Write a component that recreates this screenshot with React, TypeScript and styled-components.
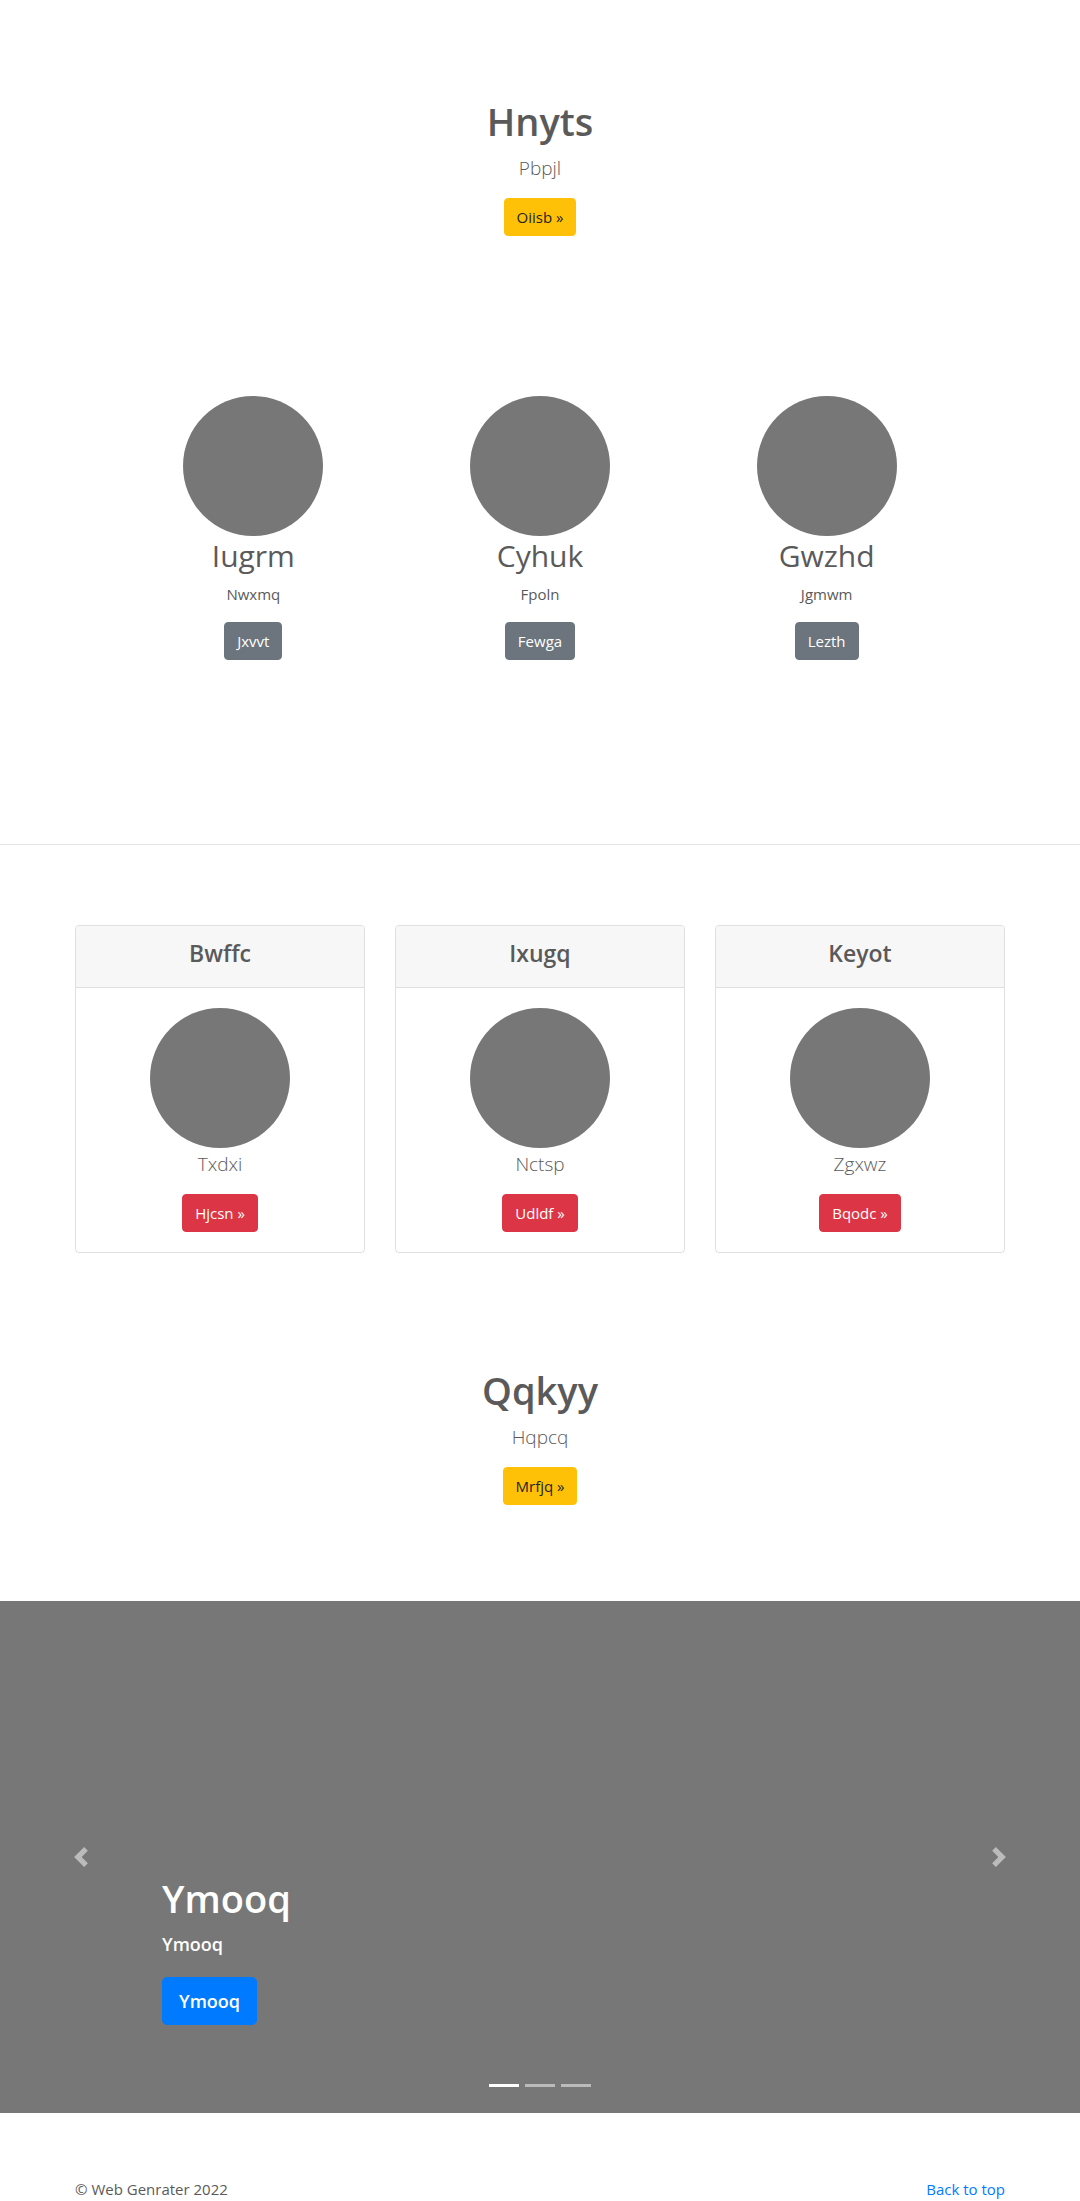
import React from "react";
import styled, { createGlobalStyle, css } from "styled-components";

const GlobalStyle = createGlobalStyle`
  *, *::before, *::after { box-sizing: border-box; }
  body {
    margin: 0;
    background: #fff;
    color: #5a5a5a;
    font-family: "Segoe UI", "Open Sans", "Noto Sans", sans-serif;
    font-size: 15px;
    line-height: 24px;
  }
  h1, h2, h3, p { margin: 0; }
`;

type Tone = "warning" | "secondary" | "danger" | "primary";

const tones: Record<Tone, { background: string; color: string }> = {
  warning: { background: "#ffc107", color: "#212529" },
  secondary: { background: "#6c757d", color: "#fff" },
  danger: { background: "#dc3545", color: "#fff" },
  primary: { background: "#007bff", color: "#fff" },
};

const Button = styled.button<{ $tone: Tone; $large?: boolean }>`
  border: 1px solid ${(p) => tones[p.$tone].background};
  border-radius: 4px;
  background: ${(p) => tones[p.$tone].background};
  color: ${(p) => tones[p.$tone].color};
  padding: 6px 12px;
  font-family: inherit;
  font-size: 15px;
  line-height: 24px;
  cursor: pointer;
  ${(p) =>
    p.$large &&
    css`
      border-radius: 5px;
      padding: 8px 16px;
      font-size: 18px;
      font-weight: 600;
      line-height: 30px;
    `}
`;

const Title = styled.h1`
  margin-bottom: 6px;
  font-size: 38px;
  font-weight: 600;
  line-height: 50px;
`;

const Lead = styled.p`
  margin-bottom: 14px;
  font-size: 19px;
  font-weight: 300;
  line-height: 32px;
`;

const Stack = styled.div`
  display: flex;
  flex-direction: column;
  align-items: center;
  text-align: center;
`;

const Hero = styled(Stack).attrs({ as: "section" })`
  padding: 96px 16px;
`;

const Circle = styled.div`
  width: 140px;
  height: 140px;
  border-radius: 50%;
  background: #777;
`;

const Services = styled.section`
  display: grid;
  grid-template-columns: repeat(3, 1fr);
  max-width: 860px;
  margin: 0 auto;
  padding: 64px 0 184px;
`;

const ServiceName = styled.h2`
  margin-bottom: 6px;
  font-size: 30px;
  font-weight: 400;
  line-height: 40px;
`;

const ServiceText = styled.p`
  margin-bottom: 16px;
`;

const Divider = styled.hr`
  margin: 0;
  border: 0;
  border-top: 1px solid #e5e5e5;
`;

const Cards = styled.section`
  display: grid;
  grid-template-columns: repeat(3, 1fr);
  gap: 30px;
  max-width: 960px;
  margin: 0 auto;
  padding: 80px 15px 16px;
`;

const Card = styled.article`
  border: 1px solid #dfdfdf;
  border-radius: 4px;
  overflow: hidden;
`;

const CardHeader = styled.header`
  padding: 12px 20px 18px;
  border-bottom: 1px solid #dfdfdf;
  background: #f7f7f7;
  text-align: center;
`;

const CardTitle = styled.h3`
  font-size: 23px;
  font-weight: 600;
  line-height: 31px;
`;

const CardBody = styled(Stack)`
  padding: 20px;
`;

const Carousel = styled.section`
  position: relative;
  display: flex;
  flex-direction: column;
  justify-content: flex-end;
  height: 512px;
  padding: 0 15% 88px;
  background: #777;
  color: #fff;
`;

const Caption = styled.div`
  display: flex;
  flex-direction: column;
  align-items: flex-start;
`;

const CaptionText = styled.p`
  margin-bottom: 18px;
  font-size: 18px;
  font-weight: 600;
  line-height: 30px;
`;

const Control = styled.button<{ $side: "left" | "right" }>`
  position: absolute;
  top: 0;
  bottom: 0;
  ${(p) => p.$side}: 0;
  display: flex;
  align-items: center;
  justify-content: center;
  width: 15%;
  padding: 0;
  border: 0;
  background: none;
  opacity: 0.5;
  cursor: pointer;
`;

const Indicators = styled.div`
  position: absolute;
  right: 0;
  bottom: 26px;
  left: 0;
  display: flex;
  justify-content: center;
  gap: 6px;
`;

const Indicator = styled.button<{ $active: boolean }>`
  width: 30px;
  height: 3px;
  padding: 0;
  border: 0;
  background: #fff;
  opacity: ${(p) => (p.$active ? 1 : 0.5)};
  cursor: pointer;
`;

const Footer = styled.footer`
  display: flex;
  justify-content: space-between;
  max-width: 960px;
  margin: 0 auto;
  padding: 64px 15px 0;
`;

const TopLink = styled.a`
  color: #007bff;
  text-decoration: none;
`;

const services = [
  { name: "Iugrm", text: "Nwxmq", action: "Jxvvt" },
  { name: "Cyhuk", text: "Fpoln", action: "Fewga" },
  { name: "Gwzhd", text: "Jgmwm", action: "Lezth" },
];

const cards = [
  { title: "Bwffc", text: "Txdxi", action: "Hjcsn »" },
  { title: "Ixugq", text: "Nctsp", action: "Udldf »" },
  { title: "Keyot", text: "Zgxwz", action: "Bqodc »" },
];

export default function App() {
  const [slide, setSlide] = React.useState(0);
  const move = (step: number) => setSlide((s) => (s + step + 3) % 3);

  return (
    <>
      <GlobalStyle />
      <main id="top">
        <Hero>
          <Title>Hnyts</Title>
          <Lead>Pbpjl</Lead>
          <Button $tone="warning">Oiisb »</Button>
        </Hero>
        <Services>
          {services.map((s) => (
            <Stack key={s.name}>
              <Circle />
              <ServiceName>{s.name}</ServiceName>
              <ServiceText>{s.text}</ServiceText>
              <Button $tone="secondary">{s.action}</Button>
            </Stack>
          ))}
        </Services>
        <Divider />
        <Cards>
          {cards.map((c) => (
            <Card key={c.title}>
              <CardHeader>
                <CardTitle>{c.title}</CardTitle>
              </CardHeader>
              <CardBody>
                <Circle />
                <Lead>{c.text}</Lead>
                <Button $tone="danger">{c.action}</Button>
              </CardBody>
            </Card>
          ))}
        </Cards>
        <Hero>
          <Title>Qqkyy</Title>
          <Lead>Hqpcq</Lead>
          <Button $tone="warning">Mrfjq »</Button>
        </Hero>
        <Carousel>
          <Caption>
            <Title>Ymooq</Title>
            <CaptionText>Ymooq</CaptionText>
            <Button $tone="primary" $large>
              Ymooq
            </Button>
          </Caption>
          <Control $side="left" aria-label="Previous" onClick={() => move(-1)}>
            <svg width="20" height="20" viewBox="0 0 8 8" fill="#fff">
              <path d="M5.25 0l-4 4 4 4 1.5-1.5-2.5-2.5 2.5-2.5-1.5-1.5z" />
            </svg>
          </Control>
          <Control $side="right" aria-label="Next" onClick={() => move(1)}>
            <svg width="20" height="20" viewBox="0 0 8 8" fill="#fff">
              <path d="M2.75 0l-1.5 1.5 2.5 2.5-2.5 2.5 1.5 1.5 4-4-4-4z" />
            </svg>
          </Control>
          <Indicators>
            {[0, 1, 2].map((i) => (
              <Indicator
                key={i}
                $active={i === slide}
                aria-label={`Slide ${i + 1}`}
                onClick={() => setSlide(i)}
              />
            ))}
          </Indicators>
        </Carousel>
      </main>
      <Footer>
        <p>© Web Genrater 2022</p>
        <TopLink href="#top">Back to top</TopLink>
      </Footer>
    </>
  );
}
